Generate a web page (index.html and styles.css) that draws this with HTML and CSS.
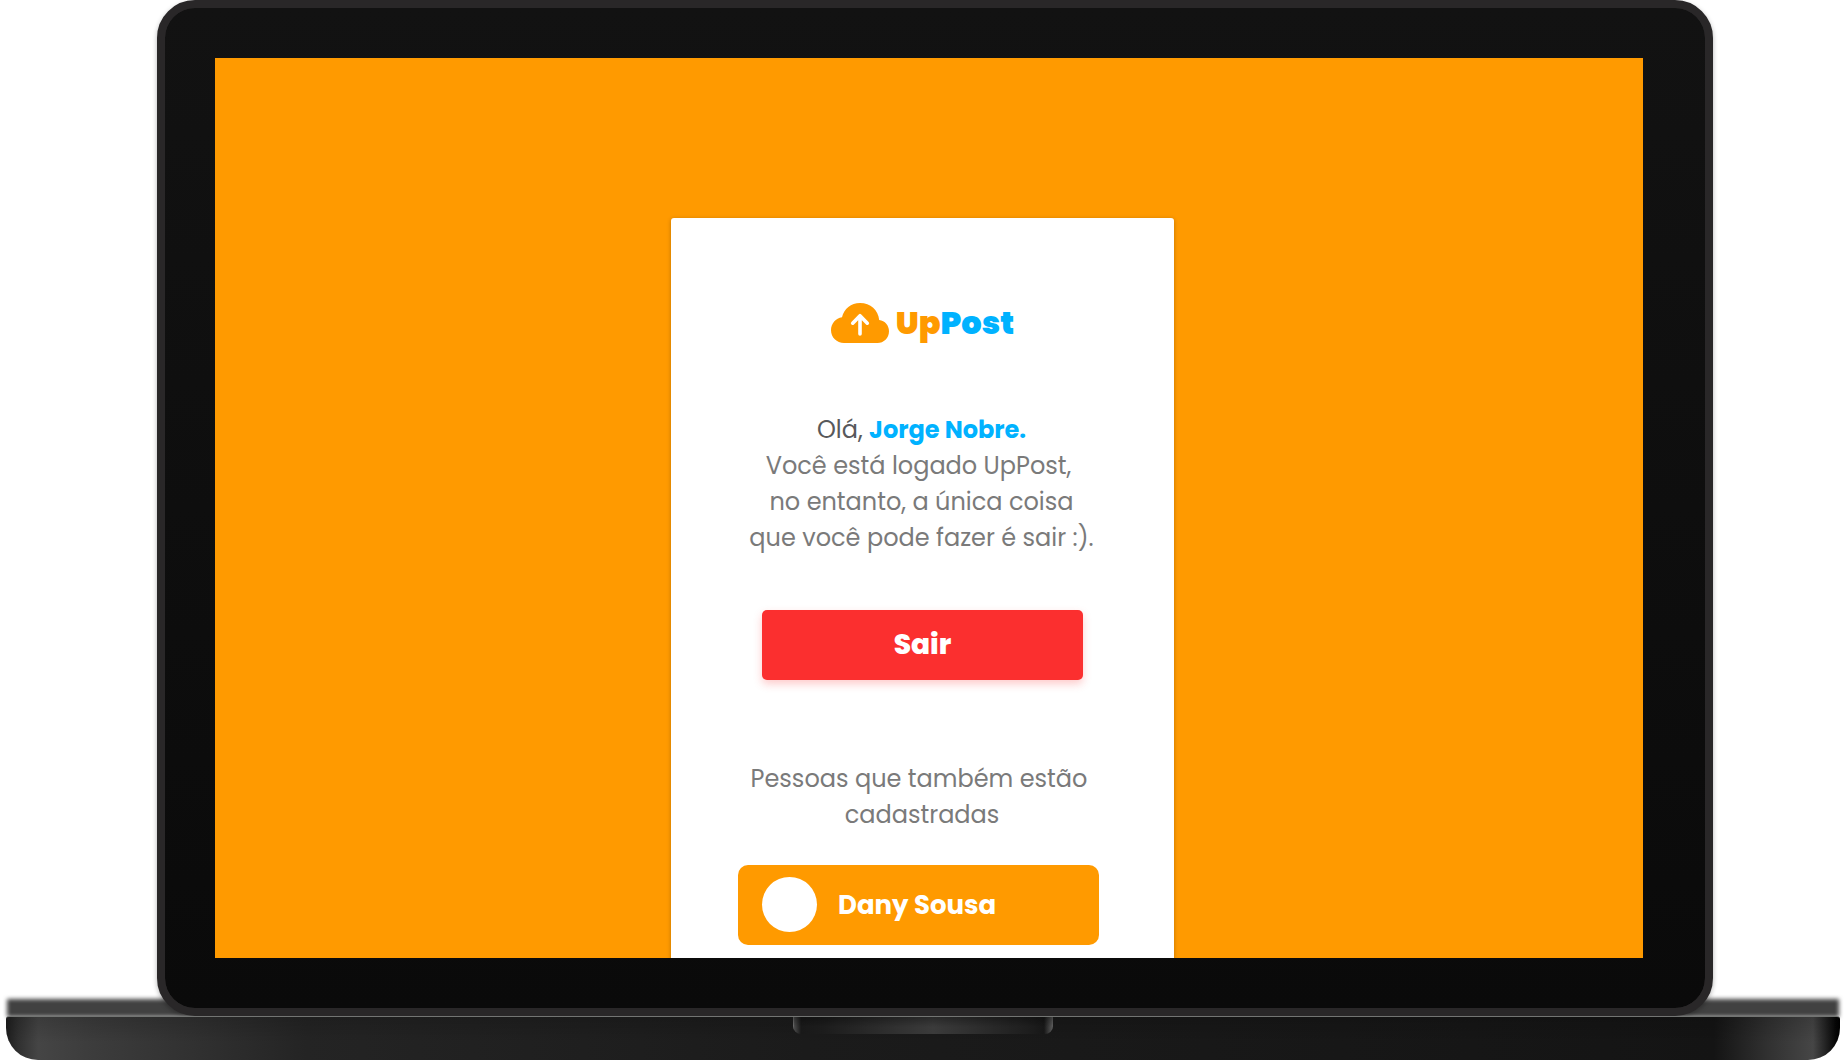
FILE: index.html
```html
<!DOCTYPE html>
<html lang="pt-BR">
<head>
<meta charset="utf-8">
<title>UpPost</title>
<link rel="stylesheet" href="styles.css">
</head>
<body>
<div class="laptop">
  <div class="lid">
    <main class="screen">
      <section class="card">
        <header class="logo">
          <svg class="cloud" viewBox="0 0 58 40" aria-hidden="true">
            <path d="M11 14.2C13 6 20 0 29 0c10.500 0 18.300 7.300 19.200 17C54 17.600 58 22.500 58 28.200 58 35 52.800 40 46.500 40H13C5.800 40 0 34.300 0 27.200 0 20.500 4.800 15.200 11 14.200Z" fill="#ff9a00"/>
            <path d="M29 31V13M21.700 20.200 29 12.700l7.300 7.500" fill="none" stroke="#fff" stroke-width="3.600" stroke-linecap="round" stroke-linejoin="round"/>
          </svg>
          <div class="wordmark"><span class="up">Up</span><span class="post">Post</span></div>
        </header>
        <div class="greeting">
          <p class="line"><span class="hi">Olá, </span><strong>Jorge Nobre.</strong></p>
          <p class="line shifted">Você está logado UpPost,</p>
          <p class="line">no entanto, a única coisa</p>
          <p class="line">que você pode fazer é sair :).</p>
        </div>
        <button class="logout" type="button">Sair</button>
        <div class="people">
          <p class="line shifted">Pessoas que também estão</p>
          <p class="line">cadastradas</p>
        </div>
        <div class="person"><span class="avatar"></span><span class="name">Dany Sousa</span></div>
      </section>
    </main>
  </div>
  <div class="hinge"></div>
  <div class="base"><div class="notch"></div></div>
</div>
</body>
</html>
```

FILE: styles.css
```css
* { box-sizing: border-box; }
body { margin: 0; background: #fff; font-family: Poppins, Inter, sans-serif; }
p { margin: 0; }
.laptop { position: relative; width: 1846px; height: 1060px; overflow: hidden; }
.lid {
  position: relative;
  z-index: 1;
  width: 1556px;
  height: 1016px;
  margin-left: 157px;
  padding: 50px;
  border: 8px solid #292728;
  border-radius: 38px;
  background: linear-gradient(#121212, #0a0a0a) padding-box, #292728;
  box-shadow: 0 2px 5px rgba(0, 0, 0, .3);
}
.screen {
  width: 1428px;
  height: 900px;
  padding: 160px 0 0 456px;
  overflow: hidden;
  background: #ff9a00;
}
.card {
  display: flex;
  flex-direction: column;
  align-items: center;
  width: 503px;
  height: 900px;
  padding-top: 81px;
  border-radius: 3px;
  background: #fff;
  box-shadow: 0 1px 4px rgba(0, 0, 0, .25);
}
.logo { display: flex; align-items: center; gap: 7px; height: 48px; }
.cloud { width: 58px; height: 40px; }
.wordmark { margin-bottom: 1px; font-size: 32px; line-height: 48px; font-weight: 900; }
.up { color: #ff9a00; }
.post { color: #00b2ff; }
.greeting { margin-top: 65px; padding-right: 2px; text-align: center; }
.line { font-size: 24px; line-height: 36px; color: #7a7a7a; white-space: nowrap; }
.hi { color: #58595b; }
.line strong { color: #00b2ff; }
.shifted { padding-right: 6px; }
.logout {
  width: 321px;
  height: 70px;
  margin-top: 54px;
  padding: 0;
  border: 0;
  border-radius: 5px;
  background: #fb2f2f;
  box-shadow: 0 4px 8px rgba(251, 47, 47, .25);
  color: #fff;
  font: 800 28px/70px Poppins, Inter, sans-serif;
}
.people { margin-top: 81px; padding-right: 1px; text-align: center; }
.person {
  display: flex;
  align-items: center;
  width: 361px;
  height: 80px;
  margin: 32px 8px 0 0;
  padding-left: 24px;
  border-radius: 10px;
  background: #ff9a00;
}
.avatar { width: 55px; height: 55px; margin-bottom: 1px; border-radius: 50%; background: #fff; }
.name { margin-left: 21px; color: #fff; font-size: 26px; font-weight: 700; }
.hinge {
  position: absolute;
  top: 999px;
  left: 7px;
  width: 1832px;
  height: 18px;
  background: #414141;
  filter: blur(2px);
}
.base {
  position: relative;
  z-index: 2;
  display: flex;
  justify-content: center;
  width: 1834px;
  height: 44px;
  margin-left: 6px;
  border-top: 1px solid #737573;
  border-radius: 3px 3px 32px 32px;
  background:
    linear-gradient(rgba(0, 0, 0, .15), transparent 60%),
    linear-gradient(90deg, #1d1d1d, #303030 12px, #454545 32px, #3d3d3d 80px, #242424 300px, #1b1b1b 800px, #151515 1600px, #141414 1708px, #303030 1760px, #464646 1807px, #303030 1815px, #050505 1830px, #000);
}
.notch {
  width: 260px;
  height: 17px;
  border-radius: 0 0 8px 8px;
  background:
    linear-gradient(rgba(0, 0, 0, .3), transparent 10px),
    linear-gradient(90deg, #888 0, #4c4c4c 1px, #191919 8px, #1c1c1c 30px, #3b3b3b 54%, #1c1c1c 240px, #171717 251px, #555 259px, #666);
}
```
